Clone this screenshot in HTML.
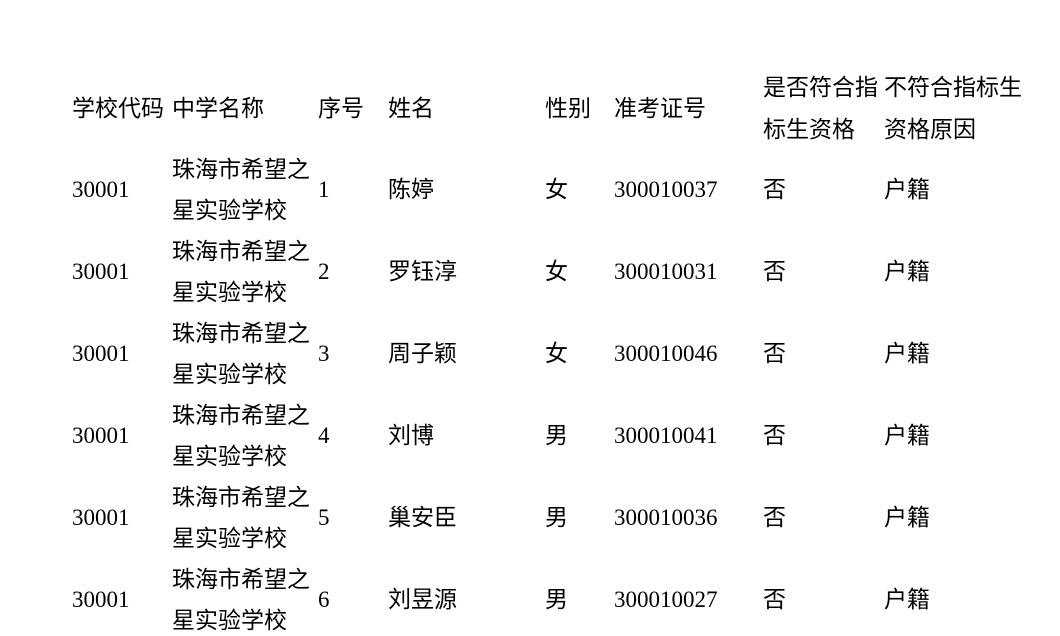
<!DOCTYPE html>
<html><head><meta charset="utf-8"><style>
body{margin:0;width:1060px;height:601px;overflow:hidden;background:#fff;position:relative;font-family:"Liberation Serif","Noto Sans CJK SC",serif;font-size:23px;color:#000;}
.t{position:absolute;line-height:30px;white-space:nowrap;}
</style></head><body>
<div id="c"></div>
<script>
var c=document.getElementById('c');
function t(x,y,s){var d=document.createElement('div');d.className='t';d.style.left=x+'px';d.style.top=(y-15)+'px';d.textContent=s;c.appendChild(d);}
t(72,109,'学校代码');t(172,109,'中学名称');t(318,109,'序号');t(388,109,'姓名');t(545,109,'性别');t(614,109,'准考证号');
t(763,88,'是否符合指');t(763,130,'标生资格');t(884,88,'不符合指标生');t(884,130,'资格原因');
var rows=[['1','陈婷','女','300010037'],['2','罗钰淳','女','300010031'],['3','周子颖','女','300010046'],['4','刘博','男','300010041'],['5','巢安臣','男','300010036'],['6','刘昱源','男','300010027']];
rows.forEach(function(r,i){var y=190+82*i;
t(72,y,'30001');t(172,y-20,'珠海市希望之');t(172,y+21,'星实验学校');t(318,y,r[0]);t(388,y,r[1]);t(545,y,r[2]);t(614,y,r[3]);t(763,y,'否');t(884,y,'户籍');});
</script>
</body></html>
